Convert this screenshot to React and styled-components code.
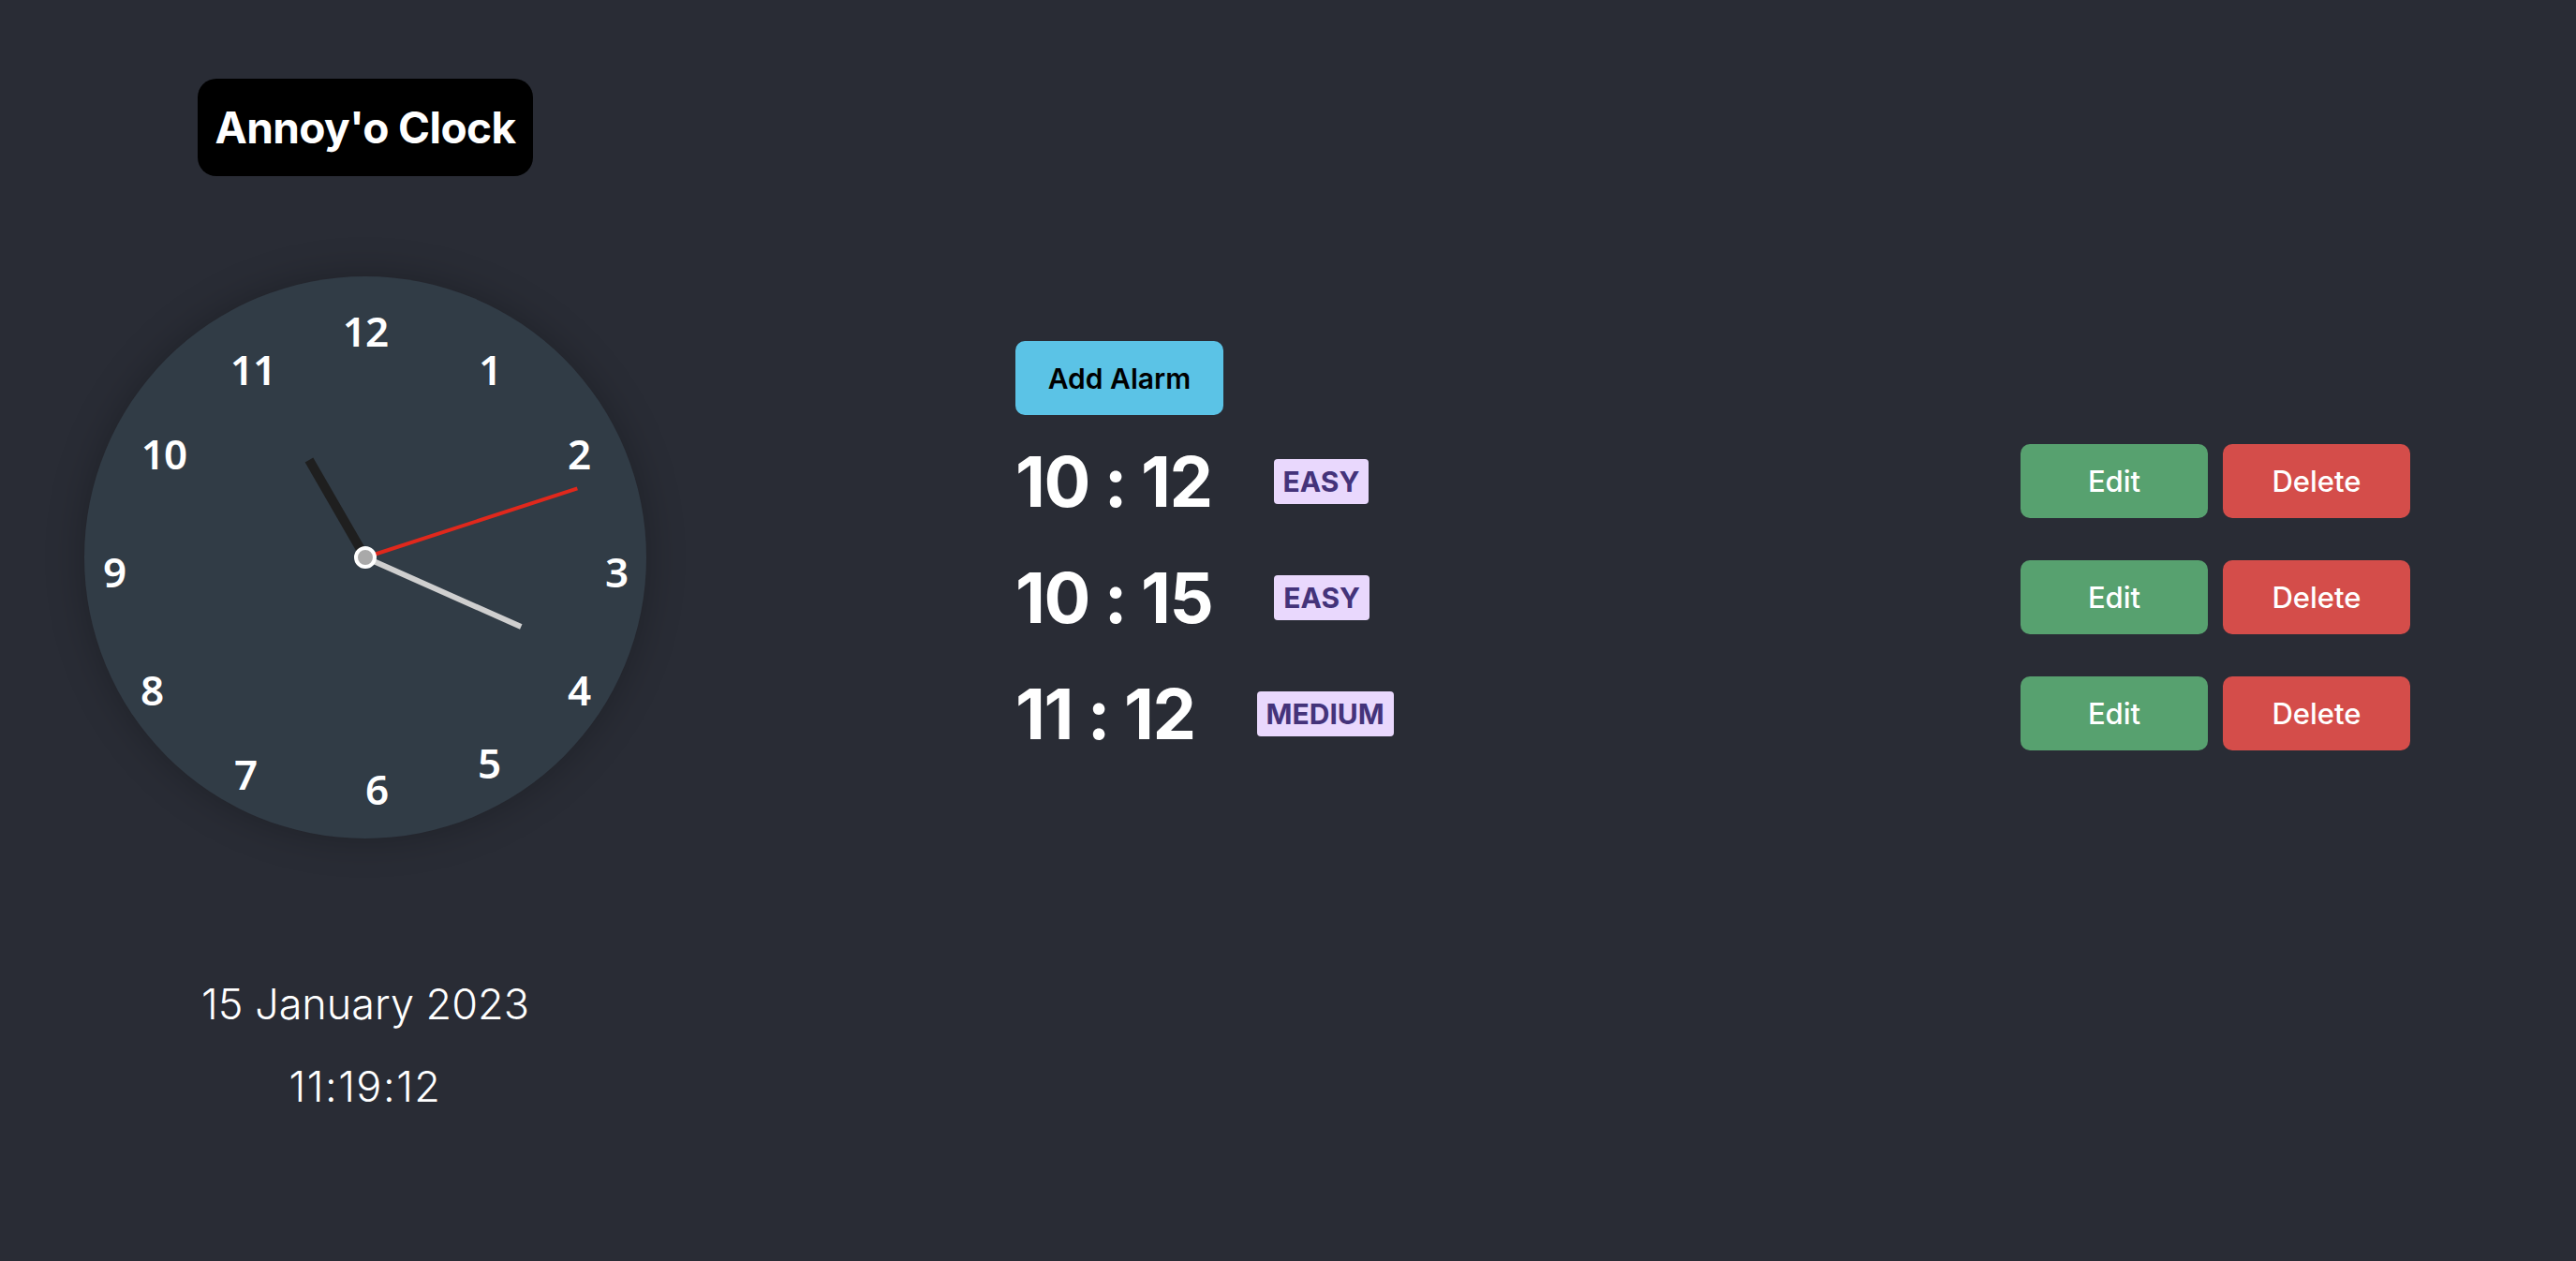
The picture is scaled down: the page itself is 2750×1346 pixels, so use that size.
import React from "react";
import styled, { createGlobalStyle } from "styled-components";

const GlobalStyle = createGlobalStyle`
  body {
    margin: 0;
    background: #292c35;
    font-family: Inter, "Noto Sans", sans-serif;
    color: white;
  }
`;

const numbers = [
  { n: 12, x: 0, y: -242 },
  { n: 1, x: 133, y: -201 },
  { n: 2, x: 228, y: -111 },
  { n: 3, x: 268, y: 15 },
  { n: 4, x: 228, y: 141 },
  { n: 5, x: 132, y: 219 },
  { n: 6, x: 12, y: 247 },
  { n: 7, x: -128, y: 231 },
  { n: 8, x: -228, y: 141 },
  { n: 9, x: -268, y: 15 },
  { n: 10, x: -215, y: -111 },
  { n: 11, x: -120, y: -201 },
];

const alarms = [
  { time: "10 : 12", level: "EASY" },
  { time: "10 : 15", level: "EASY" },
  { time: "11 : 12", level: "MEDIUM" },
];

function App() {
  return (
    <Page>
      <GlobalStyle />
      <LeftColumn>
        <Title>Annoy'o Clock</Title>
        <ClockFace>
          {numbers.map((item) => (
            <Number key={item.n} dx={item.x} dy={item.y}>
              {item.n}
            </Number>
          ))}
          <Hand length={120} thick={10} color="#1f1f1f" angle={-30} />
          <Hand length={182} thick={6} color="#cfcfcf" angle={114} tail={10} />
          <Hand length={238} thick={4} color="#e0281c" angle={72} />
          <CenterDot />
        </ClockFace>
        <DateText>15 January 2023</DateText>
        <TimeText>11:19:12</TimeText>
      </LeftColumn>
      <RightColumn>
        <AddButton>Add Alarm</AddButton>
        {alarms.map((alarm, i) => (
          <AlarmRow key={i}>
            <AlarmInfo>
              <AlarmTime>{alarm.time}</AlarmTime>
              <Badge>{alarm.level}</Badge>
            </AlarmInfo>
            <Actions>
              <ActionButton bg="#57a16f">Edit</ActionButton>
              <ActionButton bg="#d44d4a">Delete</ActionButton>
            </Actions>
          </AlarmRow>
        ))}
      </RightColumn>
    </Page>
  );
}

export default App;

const Page = styled.div`
  display: flex;
  min-height: 100vh;
`;

const LeftColumn = styled.div`
  width: 780px;
  display: flex;
  flex-direction: column;
  align-items: center;
  padding-top: 84px;
`;

const Title = styled.div`
  height: 104px;
  padding: 0 18px;
  display: flex;
  align-items: center;
  background: #000;
  border-radius: 20px;
  font-size: 46px;
  font-weight: 700;
  letter-spacing: -0.6px;
`;

const ClockFace = styled.div`
  position: relative;
  margin-top: 107px;
  width: 600px;
  height: 600px;
  border-radius: 50%;
  background: #313c46;
  box-shadow: 0 0 40px rgba(0, 0, 0, 0.25);
`;

const Number = styled.span`
  position: absolute;
  left: calc(50% + ${(props) => props.dx}px);
  top: calc(50% + ${(props) => props.dy}px);
  transform: translate(-50%, -50%);
  font-family: "Noto Sans", sans-serif;
  font-size: 44px;
  font-weight: 600;
  line-height: 1;
  letter-spacing: -1px;
`;

const Hand = styled.div`
  position: absolute;
  left: calc(50% - ${(props) => props.thick / 2}px);
  bottom: calc(50% - ${(props) => props.tail || 0}px);
  width: ${(props) => props.thick}px;
  height: ${(props) => props.length + (props.tail || 0)}px;
  background: ${(props) => props.color};
  transform-origin: 50% calc(100% - ${(props) => props.tail || 0}px);
  transform: rotate(${(props) => props.angle}deg);
`;

const CenterDot = styled.div`
  position: absolute;
  left: 50%;
  top: 50%;
  width: 16px;
  height: 16px;
  border: 4px solid #fff;
  border-radius: 50%;
  background: #a9a9a9;
  transform: translate(-50%, -50%);
`;

const DateText = styled.div`
  margin-top: 150px;
  font-size: 45px;
  font-weight: 300;
  line-height: 54px;
`;

const TimeText = styled.div`
  margin-top: 34px;
  font-size: 45px;
  font-weight: 300;
  line-height: 54px;
  letter-spacing: 1.5px;
`;

const RightColumn = styled.div`
  flex: 1;
  display: flex;
  flex-direction: column;
  padding: 364px 177px 0 304px;
`;

const AddButton = styled.button`
  align-self: flex-start;
  width: 222px;
  height: 79px;
  border: none;
  border-radius: 10px;
  background: #5bc3e6;
  color: #000;
  font-family: Inter, sans-serif;
  font-size: 30px;
  font-weight: 600;
`;

const AlarmRow = styled.div`
  display: flex;
  align-items: center;
  justify-content: space-between;
  height: 79px;
  margin-top: 31px;

  & + & {
    margin-top: 45px;
  }
`;

const AlarmInfo = styled.div`
  display: flex;
  align-items: center;
  gap: 66px;
`;

const AlarmTime = styled.div`
  font-size: 74px;
  font-weight: 700;
  line-height: 1;
  letter-spacing: -1.5px;
`;

const Badge = styled.span`
  height: 48px;
  padding: 0 10px;
  display: flex;
  align-items: center;
  border-radius: 4px;
  background: #e9d8fd;
  color: #44337a;
  font-size: 30px;
  font-weight: 700;
`;

const Actions = styled.div`
  display: flex;
  gap: 16px;
`;

const ActionButton = styled.button`
  width: 200px;
  height: 79px;
  border: none;
  border-radius: 10px;
  background: ${(props) => props.bg};
  color: #fff;
  font-family: Inter, sans-serif;
  font-size: 31px;
  font-weight: 500;
`;
